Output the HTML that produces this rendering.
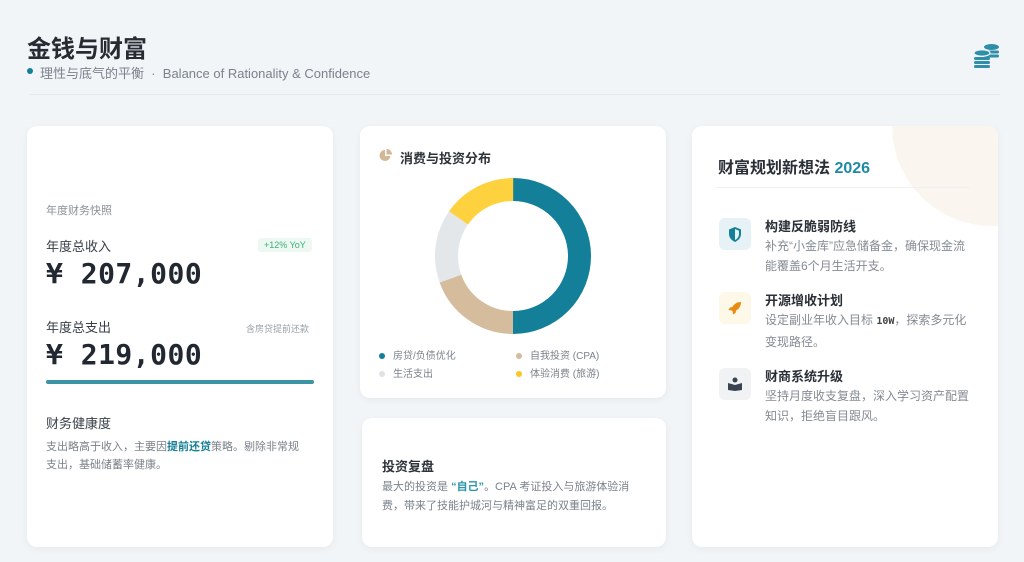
<!DOCTYPE html>
<html><head><meta charset="utf-8"><style>
*{margin:0;padding:0;box-sizing:border-box}
body{width:1024px;height:562px;background:#f2f5f7;font-family:"Liberation Sans","Noto Sans CJK SC",sans-serif;color:#2b3038;position:relative;overflow:hidden}
.abs{position:absolute}
.card{position:absolute;background:#fff;border-radius:10px;box-shadow:0 2px 8px rgba(0,0,0,.05)}
.mono{font-family:"DejaVu Sans Mono","Liberation Mono",monospace;font-weight:bold}
.g{color:#8a9099}
</style></head><body>
<div class="abs" style="left:27px;top:29px;font-size:24px;font-weight:bold;color:#272c33">金钱与财富</div>
<div class="abs" style="left:27px;top:68px;width:6px;height:6px;border-radius:50%;background:#157f98"></div>
<div class="abs g" style="left:40px;top:63px;font-size:13px;color:#7b828b">理性与底气的平衡 &nbsp;·&nbsp; Balance of Rationality &amp; Confidence</div>
<div class="abs" style="left:30px;top:94px;width:970px;height:1px;background:#e4e8eb"></div>
<svg class="abs" style="left:973px;top:43px" width="28" height="26" viewBox="0 0 28 26"><g fill="#2f8fa8">
<ellipse cx="18.5" cy="4" rx="7.5" ry="3"/><rect x="11" y="7.5" width="15" height="3" rx="1.5"/><rect x="11" y="11.5" width="15" height="3" rx="1.5"/>
<ellipse cx="9" cy="10" rx="8" ry="3.2" stroke="#f2f5f7" stroke-width="1.2"/><rect x="1" y="14" width="16" height="3" rx="1.5"/><rect x="1" y="18" width="16" height="3" rx="1.5"/><rect x="1" y="22" width="16" height="3" rx="1.5"/></g></svg>

<div class="card" style="left:27px;top:126px;width:306px;height:421px">
<div class="abs g" style="left:19px;top:76px;font-size:11px">年度财务快照</div>
<div class="abs" style="left:19px;top:110px;font-size:13px;color:#3a4048">年度总收入</div>
<div class="abs" style="left:231px;top:112px;font-size:9px;color:#3bb07a;background:#ecf8f1;padding:2px 6px;border-radius:3px">+12% YoY</div>
<div class="abs mono" style="left:19px;top:131px;font-size:28px;color:#222831;letter-spacing:0.5px">¥ 207,000</div>
<div class="abs" style="left:19px;top:191px;font-size:13px;color:#3a4048">年度总支出</div>
<div class="abs g" style="left:219px;top:196px;font-size:9px;color:#9aa0a7">含房贷提前还款</div>
<div class="abs mono" style="left:19px;top:212px;font-size:28px;color:#222831;letter-spacing:0.5px">¥ 219,000</div>
<div class="abs" style="left:19px;top:254px;width:268px;height:4px;border-radius:2px;background:#3c93a6"></div>
<div class="abs" style="left:19px;top:287px;font-size:13px;color:#3a4048">财务健康度</div>
<div class="abs" style="left:19px;top:312px;width:262px;font-size:11px;line-height:18px;color:#7b828b">支出略高于收入，主要因<b style="color:#157f98">提前还贷</b>策略。剔除非常规支出，基础储蓄率健康。</div>
</div>

<div class="card" style="left:360px;top:126px;width:306px;height:272px">
<svg class="abs" style="left:19px;top:23px" width="13" height="13" viewBox="0 0 13 13"><path d="M6 1A5.5 5.5 0 1 0 11.5 7H6Z" fill="#d2b897"/><path d="M7.5 0V5.5H13A5.5 5.5 0 0 0 7.5 0Z" fill="#d2b897"/></svg>
<div class="abs" style="left:40px;top:22px;font-size:13px;font-weight:bold;color:#2f343b">消费与投资分布</div>
<svg class="abs" style="left:75px;top:52px" width="156" height="156" viewBox="-78 -78 156 156">
<g fill="none" stroke-width="23">
<circle r="66.5" stroke="#137f98" stroke-dasharray="208.9 500" transform="rotate(-90)"/>
<circle r="66.5" stroke="#d5bc9c" stroke-dasharray="81.5 500" transform="rotate(90)"/>
<circle r="66.5" stroke="#e4e7ea" stroke-dasharray="64 500" transform="rotate(160)"/>
<circle r="66.5" stroke="#fdd23e" stroke-dasharray="64 500" transform="rotate(215)"/>
</g></svg>
<div class="abs" style="left:19px;top:222px;font-size:10px;color:#7b828b;line-height:18px">
<div><span style="display:inline-block;width:6px;height:6px;border-radius:50%;background:#137f98;margin-right:8px"></span>房贷/负债优化</div>
<div><span style="display:inline-block;width:6px;height:6px;border-radius:50%;background:#e0e2e5;margin-right:8px"></span>生活支出</div></div>
<div class="abs" style="left:156px;top:222px;font-size:10px;color:#7b828b;line-height:18px">
<div><span style="display:inline-block;width:6px;height:6px;border-radius:50%;background:#d5bc9c;margin-right:8px"></span>自我投资 (CPA)</div>
<div><span style="display:inline-block;width:6px;height:6px;border-radius:50%;background:#fdc521;margin-right:8px"></span>体验消费 (旅游)</div></div>
</div>

<div class="card" style="left:362px;top:418px;width:304px;height:129px">
<div class="abs" style="left:20px;top:38px;font-size:13px;font-weight:bold;color:#2f343b">投资复盘</div>
<div class="abs" style="left:20px;top:60px;width:256px;font-size:11px;line-height:19px;color:#7b828b">最大的投资是 <b style="color:#2a95ad">“自己”</b>。CPA 考证投入与旅游体验消费，带来了技能护城河与精神富足的双重回报。</div>
</div>

<div class="card" style="left:692px;top:126px;width:306px;height:421px;overflow:hidden">
<div class="abs" style="left:200px;top:-100px;width:200px;height:200px;border-radius:50%;background:#faf6ef"></div>
<div class="abs" style="left:26px;top:28px;font-size:16px;font-weight:bold;color:#2b3038">财富规划新想法 <span style="color:#1f8aa3">2026</span></div>
<div class="abs" style="left:24px;top:61px;width:254px;height:1px;background:#eef0f2"></div>
<div class="abs" style="left:27px;top:92px;width:32px;height:32px;border-radius:6px;background:#e6f2f5"></div>
<svg class="abs" style="left:36px;top:101px" width="14" height="15" viewBox="0 0 14 15"><path d="M7 0L13 2.5V7C13 11 10 13.5 7 15C4 13.5 1 11 1 7V2.5Z" fill="#137f98"/><path d="M7 2L11 3.8V7C11 10 9 12 7 13Z" fill="#e6f2f5"/></svg>
<div class="abs" style="left:73px;top:90px;font-size:13px;font-weight:bold;color:#2b3038">构建反脆弱防线</div>
<div class="abs" style="left:73px;top:110px;width:208px;font-size:12px;line-height:20px;color:#858b93">补充“小金库”应急储备金，确保现金流能覆盖6个月生活开支。</div>
<div class="abs" style="left:27px;top:166px;width:32px;height:32px;border-radius:6px;background:#fdf8e8"></div>
<svg class="abs" style="left:36px;top:175px" width="14" height="14" viewBox="0 0 14 14"><path d="M13 1C9 1 6 3 4.5 6L2 6.5L0.5 9L4 9.5L4.5 10L5 13.5L7.5 12L8 9.5C11 8 13 5 13 1Z" fill="#e98a12"/></svg>
<div class="abs" style="left:73px;top:164px;font-size:13px;font-weight:bold;color:#2b3038">开源增收计划</div>
<div class="abs" style="left:73px;top:184px;width:212px;font-size:12px;line-height:20px;color:#858b93">设定副业年收入目标 <b class="mono" style="color:#444;font-size:10px">10W</b>，探索多元化变现路径。</div>
<div class="abs" style="left:27px;top:242px;width:32px;height:32px;border-radius:6px;background:#f1f2f4"></div>
<svg class="abs" style="left:36px;top:251px" width="14" height="14" viewBox="0 0 14 14"><circle cx="7" cy="3" r="2.5" fill="#3a4350"/><path d="M0 6L7 8L14 6V13L7 14L0 13Z" fill="#3a4350"/></svg>
<div class="abs" style="left:73px;top:240px;font-size:13px;font-weight:bold;color:#2b3038">财商系统升级</div>
<div class="abs" style="left:73px;top:260px;width:212px;font-size:12px;line-height:20px;color:#858b93">坚持月度收支复盘，深入学习资产配置知识，拒绝盲目跟风。</div>
</div>
</body></html>
